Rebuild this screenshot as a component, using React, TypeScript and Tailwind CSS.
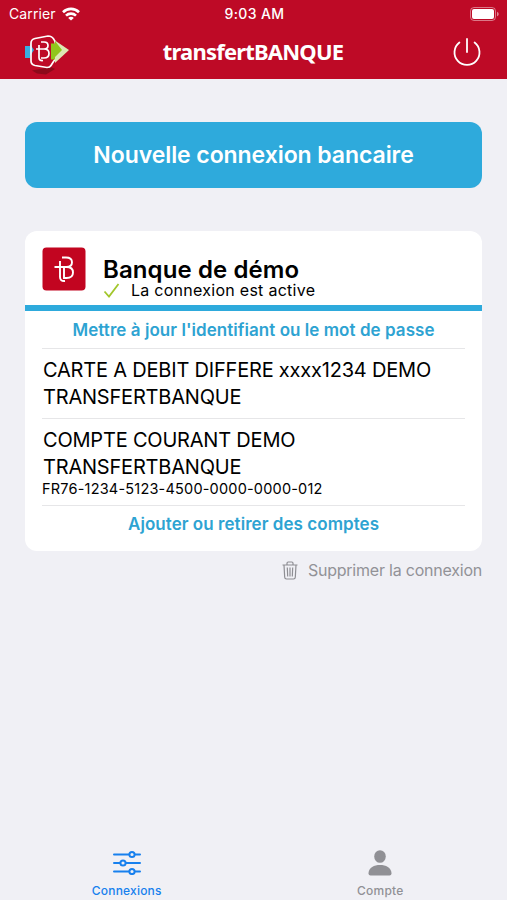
import React from 'react'

const accounts = [
  { lines: ['CARTE A DEBIT DIFFERE xxxx1234 DEMO', 'TRANSFERTBANQUE'], iban: '' },
  { lines: ['COMPTE COURANT DEMO', 'TRANSFERTBANQUE'], iban: 'FR76-1234-5123-4500-0000-0000-012' },
]

const StatusBar = () => (
  <div className="grid h-7 grid-cols-3 items-center pl-[9px] pr-[7px] text-[14px] leading-7 tracking-[0.1px]">
    <div className="flex items-center gap-[6px]">
      <span>Carrier</span>
      <svg width="18" height="14" viewBox="0 0 18 14" fill="none" stroke="white" strokeWidth="2.6">
        <path d="M1 5.2a11.4 11.4 0 0 1 16 0" />
        <path d="M4 8.6a7.2 7.2 0 0 1 10 0" />
        <path d="M9 13.6 6.2 10.9a3.8 3.8 0 0 1 5.6 0Z" fill="white" stroke="none" />
      </svg>
    </div>
    <span className="text-center font-medium tracking-[0.4px]">9:03 AM</span>
    <svg className="justify-self-end" width="30" height="14" viewBox="0 0 30 14">
      <rect x="0.5" y="0.5" width="25" height="13" rx="3.5" fill="none" stroke="white" strokeOpacity="0.45" />
      <rect x="2" y="2" width="22" height="10" rx="2" fill="white" />
      <path d="M27 4.7c2.3 1 2.3 3.6 0 4.6Z" fill="white" fillOpacity="0.5" />
    </svg>
  </div>
)

const Logo = () => (
  <svg width="46" height="44" viewBox="0 0 46 44" fill="none">
    <path d="M8 37.5 27 34l4 2-9 5.5-9-1Z" fill="#8d0a1b" />
    <path d="M1 13h5v-2l4 6-4 6v2H1Z" fill="#38afe0" />
    <path d="M11 5.5 24 3q4 0 6 3.5 1.500 2 1.500 5v13q0 2-2 4l-2.500 4q-1 2-4 2l-12-2q-4-1-4-4.500V10q0-3.500 4-4.500Z" stroke="white" strokeWidth="1.7" />
    <path d="M31 7.5 45 17 31 30Z" fill="#dce8b3" />
    <path d="M27 10.5h4V8l7 9-7 7v2.5h-4Z" fill="#91c51c" />
    <path d="M15 12v12.500q0 3.500 4 3M12 16h10M17 9h3q4 0 4 3.500t-4 3.500q5 0 5 4.500t-5 4.500h-3" stroke="white" strokeWidth="1.7" />
  </svg>
)

const PowerIcon = () => (
  <svg width="30" height="30" viewBox="0 0 30 30" fill="none" stroke="white" strokeWidth="1.8" strokeLinecap="round">
    <path d="M15 2v13M7.4 5.5a12.5 12.5 0 1 0 15.2 0" />
  </svg>
)

const BankIcon = () => (
  <svg width="44" height="44" viewBox="0 0 44 44" fill="none">
    <rect x="0.5" y="0.5" width="43" height="43" rx="4" fill="#c20520" />
    <path d="M18 14v16q0 4.500 5 4M12.500 20h13M20 10.500h4q6 0 6 4.700t-5.500 4.800q6.500 0 6.500 5.500t-6.500 5.500h-2.500v-11" stroke="white" strokeWidth="1.9" />
  </svg>
)

const TrashIcon = () => (
  <svg width="16" height="19" viewBox="0 0 16 19" fill="none" stroke="#8e8e93" strokeWidth="1.2">
    <path d="M.5 4h15M5 4V2.200Q5 1 6.200 1h3.600Q11 1 11 2.200V4M2 4l.7 12.300q.1 1.700 1.800 1.700h7q1.700 0 1.800-1.700L14 4M5.300 6.500l.4 9M8 6.500v9M10.700 6.500l-.4 9" />
  </svg>
)

const App = () => {
  return (
    <div className="flex h-[900px] w-[507px] flex-col bg-[#f0f0f5] font-['Inter','Liberation_Sans',sans-serif] text-black">
      <header className="h-[79px] bg-[#be0a26] text-white">
        <StatusBar />
        <div className="flex h-[51px] items-start justify-between pl-6 pr-[25px]">
          <div className="mt-[5px] w-[60px]"><Logo /></div>
          <h1 className="font-['Noto_Sans',sans-serif] text-[22px] font-bold leading-[47px] tracking-[-0.8px]">transfertBANQUE</h1>
          <div className="mt-[9px] flex w-[60px] justify-end"><PowerIcon /></div>
        </div>
      </header>

      <main className="flex-1 px-[25px] pt-[43px]">
        <button className="h-[66px] w-full rounded-[12px] bg-[#2eaadc] text-[23px] font-semibold tracking-[-0.07px] text-white">
          Nouvelle connexion bancaire
        </button>

        <section className="mt-[43px] h-[320px] overflow-hidden rounded-[12px] bg-white">
          {/* Bank and connection state */}
          <div className="flex h-20 border-b-[6px] border-[#2eaadc] pl-[17px] pt-4">
            <BankIcon />
            <div className="ml-[17px] pt-[11px]">
              <h2 className="text-[24px] font-semibold leading-[23px] tracking-[0.1px]">Banque de démo</h2>
              <div className="flex h-[18px] items-center">
                <svg width="17" height="17" viewBox="0 0 17 17" fill="none" stroke="#a2c62b" strokeWidth="1.8">
                  <path d="m1.5 9.5 4.5 5L15.5 2" />
                </svg>
                <span className="ml-[11px] text-[16px] leading-[18px] tracking-[0.27px]">La connexion est active</span>
              </div>
            </div>
          </div>

          <div className="px-[17px]">
            <a className="block h-[37px] whitespace-nowrap text-center text-[17px] font-semibold leading-[38px] tracking-[0.05px] text-[#2ea3d2]">
              Mettre à jour l'identifiant ou le mot de passe
            </a>
            {accounts.map((account) => (
              <div key={account.lines[0]} className="border-t border-[#e6e6e8] pb-[7px] pt-2 last-of-type:pb-2">
                {account.lines.map((line) => (
                  <p key={line} className="whitespace-nowrap pl-px text-[20px] leading-[27px] tracking-[-0.2px]">{line}</p>
                ))}
                {account.iban && <p className="-mt-px text-[14.5px] leading-[17px] tracking-[0.2px]">{account.iban}</p>}
              </div>
            ))}
            <a className="block border-t border-[#e6e6e8] text-center text-[17px] font-semibold leading-[37px] tracking-[0.05px] text-[#2ea3d2]">
              Ajouter ou retirer des comptes
            </a>
          </div>
        </section>

        <div className="mt-[9px] flex h-5 items-center justify-end gap-[10px] text-[16px] text-[#929297]">
          <TrashIcon />
          <span className="leading-5 tracking-[-0.22px]">Supprimer la connexion</span>
        </div>
      </main>

      {/* Tab bar */}
      <nav className="grid h-[51px] grid-cols-2 text-[12px] font-medium tracking-[0.2px]">
        <div className="flex flex-col items-center text-[#1780ee]">
          <svg width="30" height="26" viewBox="0 0 30 26" fill="#f0f0f5" stroke="currentColor" strokeWidth="2" strokeLinecap="round">
            <path d="M2 5.5h26M2 14h26M2 22.5h26" />
            <circle cx="20" cy="5.5" r="2.6" />
            <circle cx="11" cy="14" r="2.6" />
            <circle cx="20" cy="22.5" r="2.6" />
          </svg>
          <span className="mt-2 leading-4">Connexions</span>
        </div>
        <div className="flex flex-col items-center text-[#909095]">
          <svg width="26" height="27" viewBox="0 0 26 27" fill="currentColor">
            <ellipse cx="13" cy="7.5" rx="5.8" ry="6.3" />
            <path d="M1.500 24C2 18.500 7 16 13 16s11 2.500 11.500 8v.5q0 2-2 2h-19q-2 0-2-2Z" />
          </svg>
          <span className="mt-[7px] leading-4">Compte</span>
        </div>
      </nav>
    </div>
  )
}

export default App
